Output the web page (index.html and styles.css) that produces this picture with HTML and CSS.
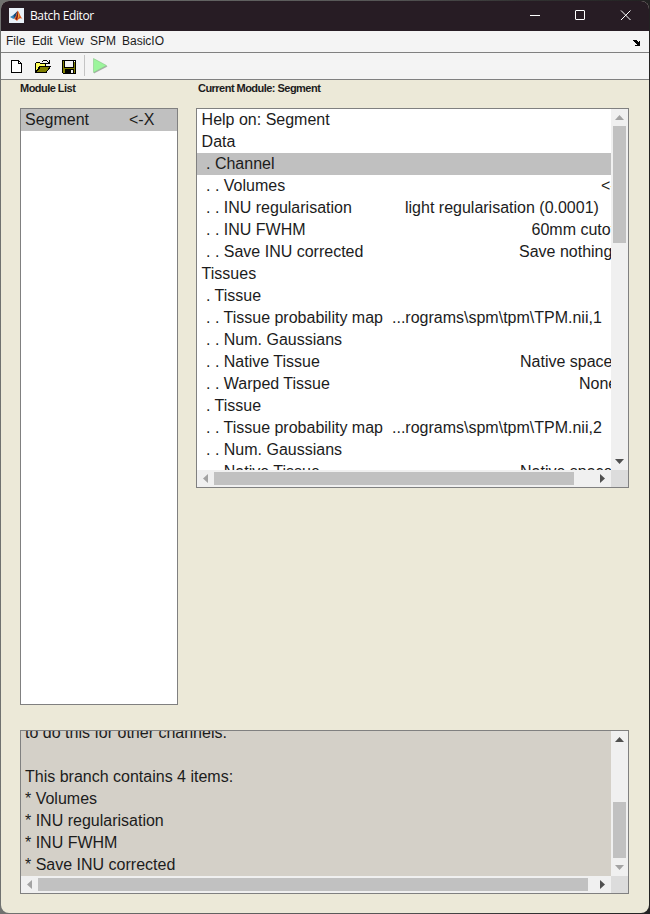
FILE: index.html
```html
<!DOCTYPE html>
<html lang="en">
<head>
<meta charset="utf-8">
<title>Batch Editor</title>
<link rel="stylesheet" href="styles.css">
</head>
<body>
<div class="window">
  <header class="titlebar">
    <svg class="logo" width="15" height="15" viewBox="0 0 15 15">
      <rect width="15" height="15" fill="#e9f1f8"/>
      <path d="M1 9 4.500 7 7 5 8.500 3 6.500 9 4.500 11Z" fill="#3583bb"/>
      <path d="M4.500 7 8.500 3 7 8 5 10Z" fill="#194a78"/>
      <path d="M8.700 2.500C10 4 11.500 9 14 11.500 12 9.500 10 10 8 13 7 12 6.500 11 5 11 7 9 7.500 5 8.700 2.500Z" fill="#d8551d"/>
      <path d="M8.700 3 9 8 7.500 12 6.500 11C8 9 8 6 8.700 3Z" fill="#6c1c18"/>
      <path d="M9 3.500 10.500 8 9 11Z" fill="#f5a33a"/>
    </svg>
    <h1>Batch Editor</h1>
    <svg class="caption" width="102" height="11" viewBox="0 0 102 11" fill="none" stroke="#fff">
      <path d="M0 5.500H10"/>
      <rect x="45.500" y="0.500" width="9" height="9" rx=".5"/>
      <path d="M91 .5 100.500 10M100.500 .5 91 10"/>
    </svg>
  </header>
  <nav class="menubar">
    <span class="m-file">File</span><span class="m-edit">Edit</span><span class="m-view">View</span><span class="m-spm">SPM</span><span class="m-basic">BasicIO</span>
    <svg class="dock" width="8" height="6" viewBox="0 0 8 6" shape-rendering="crispEdges"><path d="M1 0H4V1H5V2H6V1H7V6H2V5H4V4H3V3H2V2H1V1H0V0Z"/></svg>
  </nav>
  <div class="toolbar">
    <svg width="120" height="26" viewBox="0 0 120 26" shape-rendering="crispEdges">
      <path d="M10.500 7.500H17.500L20.500 10.500V19.500H10.500Z" fill="#fff" stroke="#000"/>
      <path d="M17.500 7.500V10.500H20.500" fill="none" stroke="#000"/>
      <path d="M34.500 19.500V10.500L35.500 9.500H38.500L39.500 10.500H44.500V13.500H38.500L34.500 19.500Z" fill="#ffff5a" stroke="#000"/>
      <path d="M35 19.500 39.500 13.500H49.500L45 19.500Z" fill="#808000" stroke="#000"/>
      <path d="M41 9V8H42V7H46V8H47V9H48V7H49V11H45V10H47V9H46V8H42V9Z"/>
      <path d="M61.500 7.500H74.500V20.500H62.500L61.500 19.500Z" fill="#808000" stroke="#000"/>
      <path d="M63 8H64V14H72V8H73V15H63Z" fill="#000"/><path d="M64 8H72V14H64Z" fill="#f4f4f4"/>
      <path d="M64 16H73V20H64Z"/><path d="M70 17H72V20H70Z" fill="#f4f4f4"/><path d="M73 8H74V9H73Z" fill="#fff"/>
      <path d="M83.500 2V23" stroke="#c4c4c4"/>
      <path d="M93 6 106.500 13.500 93 20.500Z" fill="#aaa" shape-rendering="auto"/>
      <path d="M92.500 5.500 105.500 12.500 92.500 19.500Z" fill="#9cf59c" stroke="#8ac98a" stroke-width=".6" shape-rendering="auto"/>
    </svg>
  </div>
  <main>
    <section class="modules">
      <h2>Module List</h2>
      <div class="list module-list"><div class="row selected"><span class="module-name">Segment</span><span>&lt;-X</span></div></div>
    </section>
    <section class="current">
      <h2>Current Module: Segment</h2>
      <div class="list scroll">
        <div class="view">
          <div class="row">Help on: Segment</div>
          <div class="row">Data</div>
          <div class="row selected l1">. Channel</div>
          <div class="row l2"><span class="name to-mark">. . Volumes</span><span>&lt;-X</span></div>
          <div class="row l2"><span class="name to-light">. . INU regularisation</span><span>light regularisation (0.0001)</span></div>
          <div class="row l2"><span class="name to-cutoff">. . INU FWHM</span><span>60mm cutoff</span></div>
          <div class="row l2"><span class="name to-save">. . Save INU corrected</span><span>Save nothing</span></div>
          <div class="row">Tissues</div>
          <div class="row l1">. Tissue</div>
          <div class="row l2"><span class="name to-path">. . Tissue probability map</span><span>...rograms\spm\tpm\TPM.nii,1</span></div>
          <div class="row l2">. . Num. Gaussians</div>
          <div class="row l2"><span class="name to-native">. . Native Tissue</span><span>Native space</span></div>
          <div class="row l2"><span class="name to-none">. . Warped Tissue</span><span>None</span></div>
          <div class="row l1">. Tissue</div>
          <div class="row l2"><span class="name to-path">. . Tissue probability map</span><span>...rograms\spm\tpm\TPM.nii,2</span></div>
          <div class="row l2">. . Num. Gaussians</div>
          <div class="row l2"><span class="name to-native">. . Native Tissue</span><span>Native space</span></div>
        </div>
        <div class="vbar"><i class="arrow up off"></i><i class="thumb"></i><i class="arrow down"></i></div>
        <div class="hbar"><i class="arrow left off"></i><i class="thumb"></i><i class="arrow right"></i></div>
        <div class="corner"></div>
      </div>
    </section>
    <section class="list scroll help">
      <div class="view">
        <div class="row">to do this for other channels.</div>
        <div class="row"></div>
        <div class="row">This branch contains 4 items:</div>
        <div class="row">* Volumes</div>
        <div class="row">* INU regularisation</div>
        <div class="row">* INU FWHM</div>
        <div class="row">* Save INU corrected</div>
      </div>
      <div class="vbar"><i class="arrow up"></i><i class="thumb"></i><i class="arrow down off"></i></div>
      <div class="hbar"><i class="arrow left off"></i><i class="thumb"></i><i class="arrow right"></i></div>
      <div class="corner"></div>
    </section>
  </main>
</div>
</body>
</html>
```
FILE: styles.css
```css
* { box-sizing: border-box; }
body { margin: 0; width: 650px; height: 914px; overflow: hidden; padding: 1px 1px 1px; background: linear-gradient(90deg, #707270, #555 60%, #333 80%, #222); font-family: "Liberation Sans", Arial, sans-serif; color: #1c1c1c; }
.window { width: 648px; height: 912px; border-radius: 8px; overflow: hidden; background: #ece9d8; }
.titlebar { height: 30px; background: #271c24; display: flex; align-items: center; padding: 0 18px 0 8px; }
.titlebar h1 { margin: -1px auto 0 6px; font: 12px "Open Sans", sans-serif; letter-spacing: -.38px; color: #fff; }
.logo { margin-top: -2px; }
.caption { margin-right: -1px; margin-top: -1px; }
.menubar { height: 22px; background: #f4f4f4; border-bottom: 1px solid #808080; display: flex; align-items: center; padding: 0 8px 1px 5px; font-size: 12px; white-space: nowrap; }
.m-file { width: 26px; }
.m-edit { width: 26px; }
.m-view { width: 32px; }
.m-spm { width: 32px; }
.dock { margin-left: auto; margin-top: 3px; }
.toolbar { height: 27px; background: #f4f4f4; border-bottom: 1px solid #808080; }
.toolbar svg { display: block; }
main { display: grid; grid-template-columns: 158px 433px; column-gap: 18px; grid-template-rows: 625px 164px; row-gap: 25px; padding-left: 19px; }
h2 { margin: 0; height: 28px; padding-top: 2px; font-size: 11px; line-height: 13px; font-weight: bold; letter-spacing: -.53px; white-space: nowrap; }
.current h2 { padding-left: 2px; }
.list { border: 1px solid #808080; background: #fff; font-size: 16px; overflow: hidden; }
.module-list { height: 597px; }
.row { display: flex; height: 22px; line-height: 21px; padding-left: 4.6px; white-space: pre; }
.row.l1, .row.l2 { padding-left: 9px; }
.selected { background: #c0c0c0; }
.module-list .row { padding-left: 4px; }
.module-name { width: 104px; }
.name { flex: none; }
.to-mark { width: 395px; }
.to-light { width: 199px; }
.to-cutoff { width: 325.5px; }
.to-save { width: 313px; }
.to-path { width: 186px; }
.to-native { width: 314px; }
.to-none { width: 373px; }
.scroll { height: 380px; display: grid; grid-template-columns: minmax(0, 1fr) 17px; grid-template-rows: minmax(0, 1fr) 17px; }
.view { overflow: hidden; }
.vbar, .hbar { display: flex; align-items: center; background: #f0f0f0; }
.vbar { flex-direction: column; }
.thumb { background: #c1c1c1; }
.vbar .thumb { width: 13px; height: 117px; }
.hbar .thumb { height: 13px; width: 360px; }
.corner { background: #dcdcdc; }
.arrow { flex: none; width: 17px; height: 17px; display: grid; place-items: center; }
.arrow::before { content: ""; width: 9px; height: 5px; background: #505050; clip-path: polygon(50% 0, 100% 100%, 0 100%); }
.arrow.off::before { background: #a3a3a3; }
.arrow.down::before { clip-path: polygon(0 0, 100% 0, 50% 100%); }
.arrow.left::before { width: 5px; height: 9px; clip-path: polygon(0 50%, 100% 0, 100% 100%); }
.arrow.right::before { width: 5px; height: 9px; clip-path: polygon(0 0, 100% 50%, 0 100%); }
.down, .right { margin-top: auto; }
.right { margin: 0 0 0 auto; }
.help { grid-column: 1 / 3; height: 164px; background: #d4d0c8; }
.help .view { display: flex; flex-direction: column; justify-content: flex-end; }
.help .row { flex: none; padding-left: 4px; }
.help .vbar .thumb { height: 56px; margin-top: auto; }
.help .vbar .down { margin-top: 1px; }
.help .hbar .thumb { width: 550px; }
```
